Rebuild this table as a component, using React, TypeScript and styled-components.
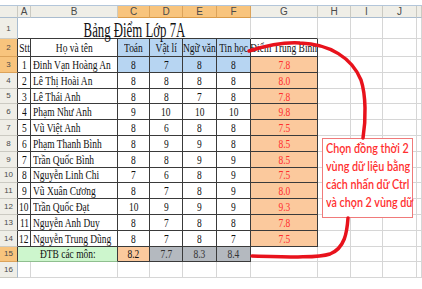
import React from "react";
import styled, { createGlobalStyle } from "styled-components";

const GRID = "#d6d6d6";
const DARK = "#3a3a3a";
const SEL_HEAD = "#f8c47d";
const BLUE = "#b7d5f2";
const PEACH = "#fbc99d";
const RED = "#ff2f2f";

const GlobalStyle = createGlobalStyle`
  html, body { margin: 0; padding: 0; background: #fff; }
  body { width: 422px; height: 289px; overflow: hidden; }
`;

const Page = styled.div`
  position: relative;
  width: 422px;
  height: 289px;
  padding-top: 5px;
  box-sizing: border-box;
`;

const Sheet = styled.div`
  display: grid;
  grid-template-columns: 18px 13px 87px 32px 33px 34px 34px 67px 33px 32px 34px 1fr;
  grid-template-rows: 12px 21px 18px repeat(14, 15.8px);
  border-top: 1px solid #b3c6da;
`;

const ColHead = styled.div<{ $sel?: boolean }>`
  box-sizing: border-box;
  display: flex;
  align-items: center;
  justify-content: center;
  background: ${(p) => (p.$sel ? SEL_HEAD : "#efeee7")};
  border-right: 1px solid ${(p) => (p.$sel ? "#dca35a" : "#cbcac2")};
  border-bottom: 1px solid ${(p) => (p.$sel ? "#d99b4a" : "#a9bccf")};
  font: 10px "Liberation Sans", Arial, sans-serif;
  color: #4a4a4a;
`;

const RowHead = styled.div<{ $sel?: boolean; $dark?: boolean }>`
  box-sizing: border-box;
  display: flex;
  align-items: center;
  justify-content: center;
  background: ${(p) => (p.$sel ? SEL_HEAD : "#efeee7")};
  border-right: 1px solid ${(p) => (p.$dark ? DARK : "#a9bccf")};
  border-bottom: 1px solid ${(p) => (p.$sel ? "#dca35a" : "#cbcac2")};
  font: 8px "Liberation Sans", Arial, sans-serif;
  color: #4a4a4a;
`;

const Cell = styled.div<{
  $bg?: string;
  $rb?: string;
  $bb?: string;
  $left?: boolean;
  $color?: string;
  $span?: number;
}>`
  box-sizing: border-box;
  grid-column: span ${(p) => p.$span ?? 1};
  display: flex;
  align-items: center;
  justify-content: ${(p) => (p.$left ? "flex-start" : "center")};
  padding: 1px 2px 0;
  overflow: hidden;
  white-space: nowrap;
  background: ${(p) => p.$bg ?? "#fff"};
  border-right: 1px solid ${(p) => p.$rb ?? GRID};
  border-bottom: 1px solid ${(p) => p.$bb ?? GRID};
  font-family: "Liberation Serif", "Times New Roman", serif;
  font-size: 13.5px;
  line-height: 14px;
  color: ${(p) => p.$color ?? "#111"};
`;

const TitleCell = styled(Cell)`
  align-items: center;
  padding: 3px 0 0;
  overflow: visible;
  font-size: 20px;
  line-height: 16px;
`;

const Txt = styled.span<{ $left?: boolean; $sx?: number }>`
  display: inline-block;
  flex: none;
  transform: scaleX(${(p) => p.$sx ?? 0.7});
  transform-origin: ${(p) => (p.$left ? "left" : "center")} center;
`;

const Note = styled.div`
  position: absolute;
  left: 322px;
  top: 138px;
  width: 91px;
  height: 80px;
  box-sizing: border-box;
  padding: 1px 0 0 3px;
  border: 1px solid #f07a7a;
  background: #fff;
  color: ${RED};
  font: 600 12.5px/18px Lato, "Liberation Sans", Arial, sans-serif;
  white-space: nowrap;
`;

const NoteLine = styled.div`
  transform: scaleX(0.86);
  transform-origin: left center;
`;

const Overlay = styled.svg`
  position: absolute;
  left: 0;
  top: 0;
  pointer-events: none;
`;

type Row = [string, string, number, number, number, number, string];

const rows: Row[] = [
  ["1", "Đinh Vạn Hoàng An", 8, 7, 8, 8, "7.8"],
  ["2", "Lê Thị Hoài An", 8, 8, 8, 8, "8.0"],
  ["3", "Lê Thái Anh", 8, 8, 7, 8, "7.8"],
  ["4", "Phạm Như Anh", 9, 10, 10, 10, "9.8"],
  ["5", "Vũ Việt Anh", 8, 6, 8, 8, "7.5"],
  ["6", "Phạm Thanh Bình", 8, 9, 9, 8, "8.5"],
  ["7", "Trần Quốc Bình", 8, 8, 9, 9, "8.5"],
  ["8", "Nguyễn Linh Chi", 7, 6, 8, 9, "7.5"],
  ["9", "Vũ Xuân Cương", 8, 7, 8, 9, "8.0"],
  ["10", "Trần Quốc Đạt", 10, 9, 9, 9, "9.3"],
  ["11", "Nguyễn Anh Duy", 8, 7, 8, 8, "7.8"],
  ["12", "Nguyễn Trung Dũng", 8, 7, 8, 7, "7.5"],
];

const letters = ["A", "B", "C", "D", "E", "F", "G", "H", "I", "J", ""];
const heads = ["Toán", "Vật lí", "Ngữ văn", "Tin học"];
const note = ["Chọn đồng thời 2", "vùng dữ liệu bằng", "cách nhấn dữ Ctrl", "và chọn 2 vùng dữ"];

function Blank({ n }: { n: number }) {
  return (
    <>
      {Array.from({ length: n }, (_, i) => (
        <Cell key={i} />
      ))}
    </>
  );
}

export default function App() {
  return (
    <Page>
      <GlobalStyle />
      <Sheet>
        {/* column letters */}
        <ColHead />
        {letters.map((l, i) => (
          <ColHead key={i} $sel={i >= 2 && i <= 5}>
            {l}
          </ColHead>
        ))}

        {/* row 1: title */}
        <RowHead>1</RowHead>
        <TitleCell $span={6} $bb={DARK}>
          <Txt $sx={0.64}>Bảng Điểm Lớp 7A</Txt>
        </TitleCell>
        <Cell $bb={DARK} />
        <Blank n={4} />

        {/* row 2: headings */}
        <RowHead $sel $dark>
          2
        </RowHead>
        <Cell $rb={DARK} $bb={DARK}>
          <Txt>Stt</Txt>
        </Cell>
        <Cell $rb={DARK} $bb={DARK}>
          <Txt>Họ và tên</Txt>
        </Cell>
        {heads.map((h) => (
          <Cell key={h} $bg={BLUE} $rb={DARK} $bb={DARK}>
            <Txt>{h}</Txt>
          </Cell>
        ))}
        <Cell $rb={DARK} $bb={DARK}>
          <Txt>Điểm Trung Bình</Txt>
        </Cell>
        <Blank n={4} />

        {/* rows 3-14: students */}
        {rows.map((r, i) => (
          <React.Fragment key={r[0]}>
            <RowHead $sel={i === 0} $dark>
              {i + 3}
            </RowHead>
            <Cell $rb={DARK} $bb={DARK}>
              <Txt>{r[0]}</Txt>
            </Cell>
            <Cell $rb={DARK} $bb={DARK} $left>
              <Txt $left>{r[1]}</Txt>
            </Cell>
            {[r[2], r[3], r[4], r[5]].map((v, j) => (
              <Cell key={j} $bg={i === 0 ? BLUE : undefined} $rb={DARK} $bb={DARK}>
                <Txt>{v}</Txt>
              </Cell>
            ))}
            <Cell $bg={PEACH} $rb={DARK} $bb={DARK} $color={RED}>
              <Txt>{r[6]}</Txt>
            </Cell>
            <Blank n={4} />
          </React.Fragment>
        ))}

        {/* row 15: averages */}
        <RowHead $sel $dark>
          15
        </RowHead>
        <Cell $span={2} $bg="#cdf6cd" $rb={DARK} $bb="#8fbf8f">
          <Txt>ĐTB các môn:</Txt>
        </Cell>
        <Cell $bg={PEACH} $rb={DARK} $bb={DARK}>
          <Txt>8.2</Txt>
        </Cell>
        {["7.7", "8.3", "8.4"].map((v) => (
          <Cell key={v} $bg="#b4b9bf" $rb={DARK} $bb={DARK} $color="#333">
            <Txt>{v}</Txt>
          </Cell>
        ))}
        <Blank n={5} />

        {/* row 16 */}
        <RowHead>16</RowHead>
        <Blank n={11} />
      </Sheet>

      <Note>
        {note.map((l) => (
          <NoteLine key={l}>{l}</NoteLine>
        ))}
      </Note>

      <Overlay width={422} height={289} viewBox="0 0 422 289">
        <path
          d="M249 51 C265 46 285 42 300 43 C330 44 352 58 361 80 C366 95 366 120 363 138"
          fill="none"
          stroke="#e8121c"
          strokeWidth={3.5}
          strokeLinecap="round"
        />
        <path
          d="M348 218 C347 232 345 248 330 254 C318 258 290 257 252 256"
          fill="none"
          stroke="#e8121c"
          strokeWidth={3.5}
          strokeLinecap="round"
        />
      </Overlay>
    </Page>
  );
}
